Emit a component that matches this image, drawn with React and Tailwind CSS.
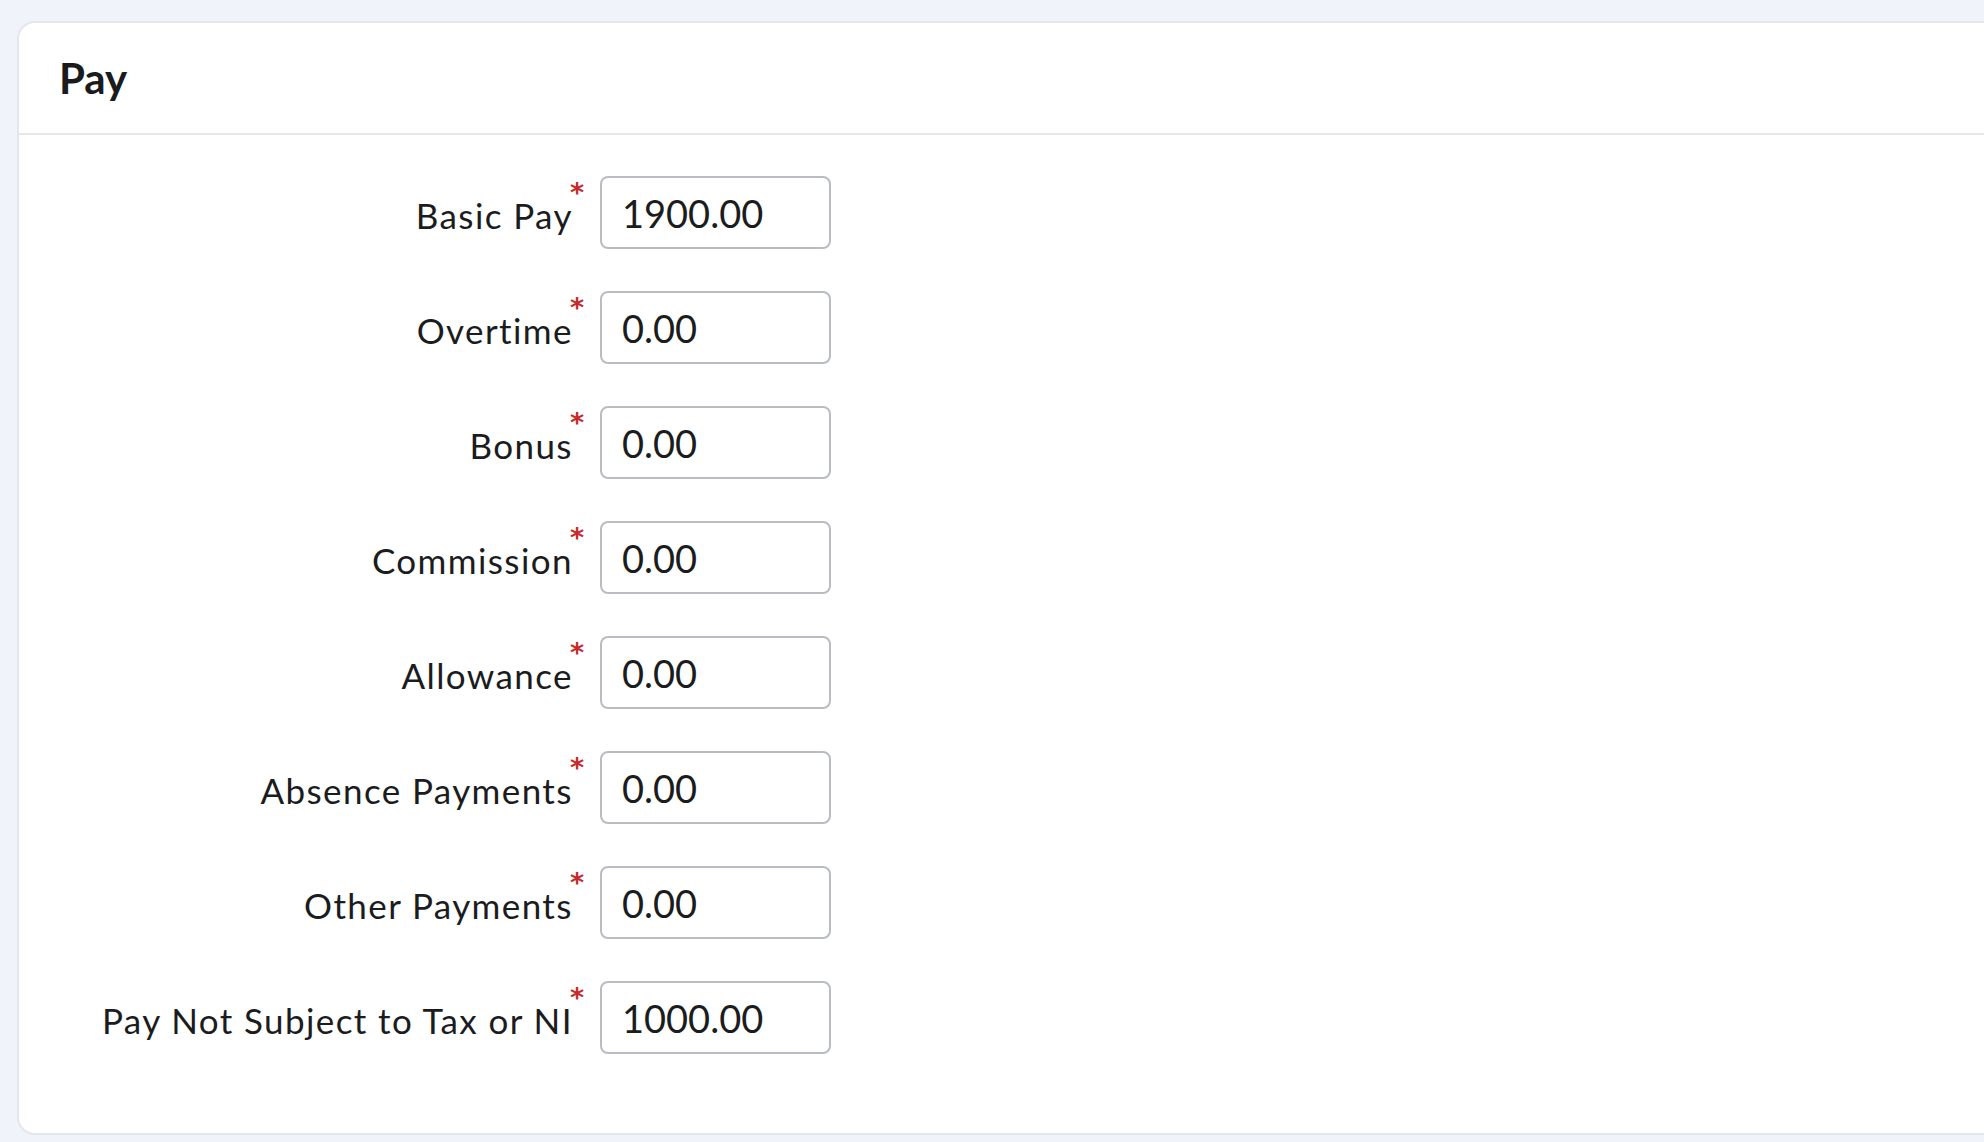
import React from "react";

const fields = [
  { label: "Basic Pay", value: "1900.00" },
  { label: "Overtime", value: "0.00" },
  { label: "Bonus", value: "0.00" },
  { label: "Commission", value: "0.00" },
  { label: "Allowance", value: "0.00" },
  { label: "Absence Payments", value: "0.00" },
  { label: "Other Payments", value: "0.00" },
  { label: "Pay Not Subject to Tax or NI", value: "1000.00" },
];

const PayField = ({ label, value }) => {
  return (
    <div className="flex h-[73px] items-stretch">
      <label className="flex w-[565px] justify-end items-start">
        <span className="mt-[19px] text-[35px] leading-[40px] tracking-[1.4px] text-[#1b1c1e]">{label}</span>
        <span
          className="-ml-[3px] mt-[3px] text-[27px] leading-none font-bold text-[#c62a2a]"
          style={{ fontFamily: "'DejaVu Sans', sans-serif" }}
        >
          *
        </span>
      </label>
      <input
        type="text"
        value={value}
        readOnly
        className="ml-[16px] w-[231px] h-[73px] rounded-[8px] border-2 border-[#b9bdc2] bg-white pl-[20px] text-[38px] text-[#1b1c1e] outline-none"
      />
    </div>
  );
};

export default function App() {
  return (
    <div
      className="min-h-screen overflow-hidden bg-[#f0f4fa] pl-[17px] pt-[21px]"
      style={{ fontFamily: "Lato, 'Open Sans', sans-serif" }}
    >
      <div className="-mr-[40px] h-[1114px] rounded-[18px] border-2 border-[#e3e6eb] bg-white">
        <div className="h-[112px] border-b-2 border-[#e5e7eb] pl-[40px] pt-[30px]">
          <h2 className="text-[42px] leading-[50px] font-bold text-[#1a1b1d]">Pay</h2>
        </div>
        <div className="flex flex-col gap-[42px] pt-[41px]">
          {fields.map((f) => (
            <PayField key={f.label} label={f.label} value={f.value} />
          ))}
        </div>
      </div>
    </div>
  );
}
